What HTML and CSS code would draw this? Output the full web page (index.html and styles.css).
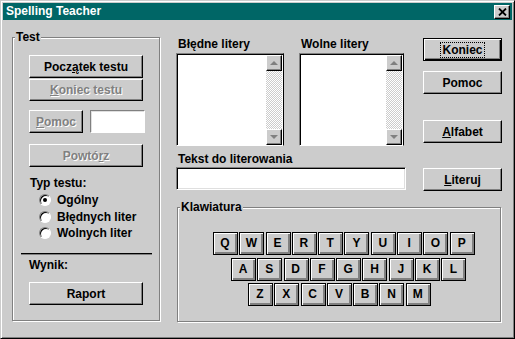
FILE: index.html
```html
<!DOCTYPE html>
<html lang="pl">
<head>
    <meta charset="UTF-8">
    <title>Spelling Teacher</title>
    <link rel="stylesheet" href="styles.css">
</head>
<body>
    <div class="window">
        <div class="titlebar">
            <span class="title">Spelling Teacher</span>
            <span class="close-btn">
                <svg width="9" height="8" viewBox="0 0 9 8"><path d="M1 0.5 L8 7.5 M8 0.5 L1 7.5" stroke="#000" stroke-width="1.8" fill="none"/></svg>
            </span>
        </div>

        <div class="client">
            <!-- lewa ramka: Test -->
            <div class="group test-group">
                <span class="group-title">Test</span>
                <button class="btn btn-wide btn-start">Pocz<u>ą</u>tek testu</button>
                <button class="btn btn-wide btn-stop disabled"><u>K</u>oniec testu</button>
                <div class="help-row">
                    <button class="btn btn-help disabled"><u>P</u>omoc</button>
                    <div class="small-field"></div>
                </div>
                <button class="btn btn-wide btn-repeat disabled">Powtó<u>r</u>z</button>

                <div class="type-label">Typ testu:</div>
                <div class="radios">
                    <div class="radio"><span class="radio-dot checked"></span>Ogólny</div>
                    <div class="radio"><span class="radio-dot"></span>Błędnych liter</div>
                    <div class="radio"><span class="radio-dot"></span>Wolnych liter</div>
                </div>

                <div class="separator"></div>
                <div class="result-label">Wynik:</div>
                <button class="btn btn-wide btn-report">Raport</button>
            </div>

            <div class="main">
                <div class="top">
                    <div class="fields">
                        <div class="lists">
                            <div class="list-col list-col-1">
                                <div class="label">Błędne litery</div>
                                <div class="listbox">
                                    <div class="scrollbar">
                                        <div class="sb-btn"><span class="arrow-up"></span></div>
                                        <div class="sb-track"></div>
                                        <div class="sb-btn"><span class="arrow-down"></span></div>
                                    </div>
                                </div>
                            </div>
                            <div class="list-col list-col-2">
                                <div class="label">Wolne litery</div>
                                <div class="listbox">
                                    <div class="scrollbar">
                                        <div class="sb-btn"><span class="arrow-up"></span></div>
                                        <div class="sb-track"></div>
                                        <div class="sb-btn"><span class="arrow-down"></span></div>
                                    </div>
                                </div>
                            </div>
                        </div>
                        <div class="label label-text">Tekst do literowania</div>
                        <div class="textfield"></div>
                    </div>

                    <div class="side-buttons">
                        <button class="btn btn-side btn-default"><span class="focus">Koniec</span></button>
                        <button class="btn btn-side btn-pomoc">Pomoc</button>
                        <button class="btn btn-side btn-alfabet"><u>A</u>lfabet</button>
                        <button class="btn btn-side btn-literuj"><u>L</u>iteruj</button>
                    </div>
                </div>

                <!-- klawiatura -->
                <div class="group keyboard">
                    <span class="group-title">Klawiatura</span>
                    <div class="key-row">
                        <div class="key">Q</div><div class="key">W</div><div class="key">E</div><div class="key">R</div><div class="key">T</div>
                        <div class="key">Y</div><div class="key">U</div><div class="key">I</div><div class="key">O</div><div class="key">P</div>
                    </div>
                    <div class="key-row row-2">
                        <div class="key">A</div><div class="key">S</div><div class="key">D</div><div class="key">F</div><div class="key">G</div>
                        <div class="key">H</div><div class="key">J</div><div class="key">K</div><div class="key">L</div>
                    </div>
                    <div class="key-row row-3">
                        <div class="key">Z</div><div class="key">X</div><div class="key">C</div><div class="key">V</div><div class="key">B</div>
                        <div class="key">N</div><div class="key">M</div>
                    </div>
                </div>
            </div>
        </div>
    </div>
</body>
</html>
```

FILE: styles.css
```css
body {
    margin: 0;
    background-color: #cccccc;
    font-family: "Liberation Sans", Arial, sans-serif;
    font-weight: bold;
    font-size: 12px;
    color: #000;
}
.window {
    width: 515px;
    height: 339px;
    box-sizing: border-box;
    border: 1px solid;
    border-color: #cccccc #000 #000 #cccccc;
    box-shadow: inset 1px 1px 0 #fff, inset -1px -1px 0 #808080;
    padding: 2px;
    background-color: #cccccc;
}
.titlebar {
    height: 17px;
    background-color: #006666;
    color: white;
    display: flex;
    align-items: center;
    justify-content: space-between;
    padding: 0 2px 0 3px;
}
.title {
    font-size: 12px;
    line-height: 17px;
}
.close-btn {
    width: 16px;
    height: 14px;
    box-sizing: border-box;
    background-color: #cccccc;
    border: 1px solid;
    border-color: #fff #000 #000 #fff;
    box-shadow: inset -1px -1px 0 #808080;
    display: flex;
    align-items: center;
    justify-content: center;
}
.client {
    display: flex;
    padding: 17px 0 0 9px;
}
.group {
    position: relative;
    box-sizing: border-box;
    border: 1px solid #808080;
    box-shadow: inset 1px 1px 0 #fff, 1px 1px 0 #fff;
}
.group-title {
    position: absolute;
    top: -8px;
    left: 2px;
    padding: 0 1px;
    line-height: 14px;
    background-color: #cccccc;
}
.test-group {
    width: 148px;
    height: 284px;
    display: flex;
    flex-direction: column;
    align-items: flex-start;
    padding-left: 16px;
}
.btn {
    box-sizing: border-box;
    height: 23px;
    padding: 0;
    font-family: inherit;
    font-weight: bold;
    font-size: 12px;
    color: #000;
    background-color: #cccccc;
    border: 1px solid;
    border-color: #fff #000 #000 #fff;
    box-shadow: inset -1px -1px 0 #808080;
    display: flex;
    align-items: center;
    justify-content: center;
}
.btn.disabled {
    color: #808080;
    text-shadow: 1px 1px 0 #fff;
}
.btn-wide {
    width: 114px;
}
.btn-start {
    margin-top: 17px;
}
.btn-stop {
    margin-top: 1px;
    height: 22px;
}
.help-row {
    display: flex;
    margin-top: 9px;
}
.btn-help {
    width: 54px;
}
.small-field {
    width: 55px;
    height: 23px;
    box-sizing: border-box;
    margin-left: 7px;
    background-color: white;
    border: 1px solid;
    border-color: #808080 #fff #fff #808080;
    box-shadow: inset 1px 1px 0 #dfdfdf;
}
.btn-repeat {
    margin-top: 11px;
}
.type-label {
    margin-top: 8px;
    padding-left: 1px;
    line-height: 16px;
}
.radios {
    margin-top: 1px;
}
.radio {
    display: flex;
    align-items: center;
    height: 16.5px;
    padding-left: 10px;
}
.radio-dot {
    position: relative;
    width: 12px;
    height: 12px;
    box-sizing: border-box;
    margin-right: 6px;
    border-radius: 50%;
    background-color: white;
    border: 1px solid;
    border-color: #808080 #fff #fff #808080;
    box-shadow: inset 1px 1px 0 #000;
}
.radio-dot.checked::after {
    content: "";
    position: absolute;
    left: 3px;
    top: 3px;
    width: 4px;
    height: 4px;
    border-radius: 50%;
    background-color: #000;
}
.separator {
    margin: 11.5px 0 0 -8px;
    width: 131px;
    height: 1px;
    background-color: #000;
    border-bottom: 1px solid #808080;
}
.result-label {
    margin-top: 2px;
    line-height: 16px;
}
.btn-report {
    margin-top: 9px;
}
.main {
    margin-left: 16px;
    display: flex;
    flex-direction: column;
}
.top {
    display: flex;
}
.fields {
    width: 230px;
}
.lists {
    display: flex;
    gap: 15px;
}
.label {
    line-height: 14px;
    padding-left: 2px;
    white-space: nowrap;
}
.listbox {
    box-sizing: border-box;
    height: 93px;
    margin-top: 2px;
    background-color: white;
    border: 1px solid;
    border-color: #808080 #000 #fff #808080;
    box-shadow: inset 1px 1px 0 #000;
    display: flex;
    justify-content: flex-end;
    padding: 1px 1px 0 0;
}
.list-col-1 .listbox {
    width: 108px;
}
.list-col-2 .listbox {
    width: 105px;
}
.scrollbar {
    width: 16px;
    display: flex;
    flex-direction: column;
}
.sb-btn {
    width: 16px;
    height: 16px;
    box-sizing: border-box;
    background-color: #cccccc;
    border: 1px solid;
    border-color: #fff #000 #000 #fff;
    box-shadow: inset -1px -1px 0 #808080;
    display: flex;
    align-items: center;
    justify-content: center;
}
.sb-track {
    flex: 1;
    background-image: repeating-conic-gradient(#fff 0 25%, #cccccc 0 50%);
    background-size: 2px 2px;
}
.arrow-up,
.arrow-down {
    width: 0;
    height: 0;
    border-left: 4px solid transparent;
    border-right: 4px solid transparent;
}
.arrow-up {
    border-bottom: 4px solid #808080;
}
.arrow-down {
    border-top: 4px solid #808080;
}
.label-text {
    margin-top: 6px;
}
.textfield {
    margin-top: 1px;
    width: 230px;
    height: 23px;
    box-sizing: border-box;
    background-color: white;
    border: 1px solid;
    border-color: #808080 #fff #fff #808080;
    box-shadow: inset 1px 1px 0 #000, inset -1px -1px 0 #dfdfdf;
}
.side-buttons {
    margin-left: 17px;
    display: flex;
    flex-direction: column;
}
.btn-side {
    width: 79px;
}
.btn-default {
    margin-top: 1px;
    border-color: #000;
    box-shadow: inset 1px 1px 0 #fff, inset -1px -1px 0 #000, inset -2px -2px 0 #808080;
}
.focus {
    outline: 1px dotted #000;
    padding: 0 1px;
    line-height: 14px;
}
.btn-pomoc {
    margin-top: 10px;
}
.btn-alfabet {
    margin-top: 26px;
}
.btn-literuj {
    margin-top: 25px;
}
.keyboard {
    margin: 16px 0 0 1px;
    width: 324px;
    height: 115px;
    padding: 24px 0 0 35px;
    display: flex;
    flex-direction: column;
    gap: 2.5px;
}
.key-row {
    display: flex;
    gap: 1.3px;
}
.row-2 {
    margin-left: 18px;
}
.row-3 {
    margin-left: 35px;
}
.key {
    width: 25px;
    height: 23px;
    box-sizing: border-box;
    border: 1px solid #000;
    background-color: #cccccc;
    box-shadow: inset 1px 1px 0 #fff, inset -2px -2px 0 #808080;
    display: flex;
    align-items: center;
    justify-content: center;
    padding: 0 1px 1px 0;
}
```
